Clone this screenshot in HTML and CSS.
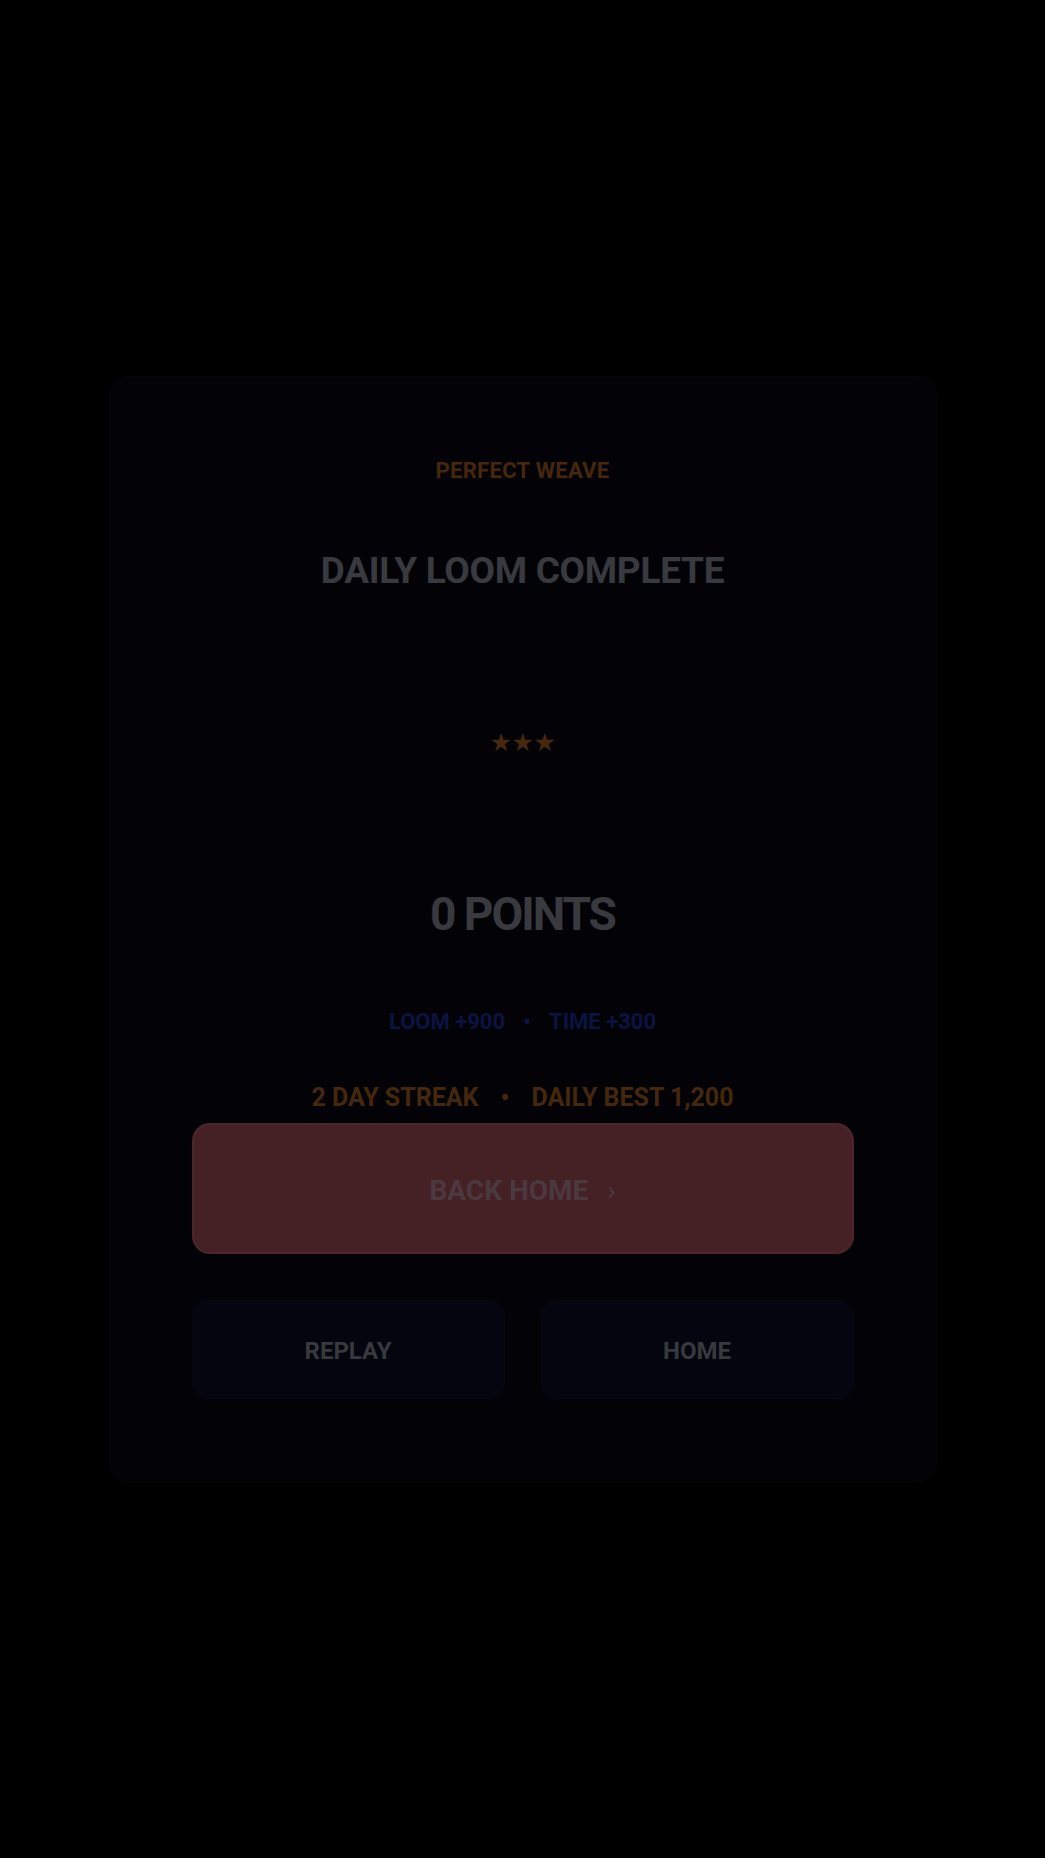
FILE: index.html
```html
<!DOCTYPE html>
<html lang="en">
<head>
<meta charset="utf-8">
<title>Daily Loom Complete</title>
<link rel="stylesheet" href="styles.css">
</head>
<body>
<div class="overlay">
  <section class="card">
    <div class="eyebrow">PERFECT WEAVE</div>
    <h1 class="title">DAILY LOOM COMPLETE</h1>
    <div class="stars">★★★</div>
    <div class="points">0 POINTS</div>
    <div class="breakdown">
      <span>LOOM +900</span><span class="dot">•</span><span>TIME +300</span>
    </div>
    <div class="streak">
      <span>2 DAY STREAK</span><span class="dot">•</span><span>DAILY BEST 1,200</span>
    </div>
    <button class="primary">BACK HOME <span class="chev">›</span></button>
    <div class="actions">
      <button class="secondary">REPLAY</button>
      <button class="secondary">HOME</button>
    </div>
  </section>
</div>
</body>
</html>
```

FILE: styles.css
```css
* { box-sizing: border-box; }
html, body {
  margin: 0;
  padding: 0;
  background: #000;
}
body {
  font-family: Roboto, "Liberation Sans", Arial, sans-serif;
  font-weight: 700;
}
.overlay {
  min-height: 1858px;
  display: flex;
  align-items: center;
  justify-content: center;
}
.card {
  width: 828px;
  background: #030307;
  border: 1px solid #05050a;
  border-radius: 18px;
  padding: 83px 82px 82px;
  display: flex;
  flex-direction: column;
  align-items: center;
  text-align: center;
}
.eyebrow {
  font-size: 22px;
  line-height: 1;
  letter-spacing: 0.3px;
  color: #46270c;
}
.title {
  margin: 70px 0 0;
  font-size: 37px;
  line-height: 1;
  font-weight: 700;
  letter-spacing: -0.3px;
  color: #393a3f;
}
.stars {
  margin-top: 141px;
  font-family: "DejaVu Sans", sans-serif;
  font-size: 25px;
  line-height: 1;
  color: #46280c;
  letter-spacing: -0.5px;
}
.points {
  margin-top: 136px;
  font-size: 46px;
  line-height: 1;
  letter-spacing: -2px;
  color: #393a3f;
}
.breakdown {
  margin-top: 74px;
  font-size: 22px;
  line-height: 1;
  color: #0b1342;
  display: flex;
  gap: 18px;
}
.streak {
  margin-top: 52px;
  font-size: 25px;
  line-height: 1;
  color: #45270c;
  display: flex;
  gap: 22px;
}
button {
  font-family: inherit;
  font-weight: 700;
  cursor: pointer;
}
.primary {
  margin-top: 13px;
  width: 100%;
  height: 131px;
  padding-top: 4px;
  background: #452125;
  border: 2px solid #4d252a;
  border-radius: 18px;
  color: #4a393f;
  font-size: 28px;
}
.chev {
  margin-left: 12px;
  font-weight: 400;
}
.actions {
  margin-top: 46px;
  width: 100%;
  display: grid;
  grid-template-columns: 1fr 1fr;
  gap: 36px;
}
.secondary {
  height: 99px;
  padding-top: 4px;
  background: #04050e;
  border: 1px solid #060711;
  border-radius: 16px;
  color: #38393d;
  font-size: 24px;
}
```
